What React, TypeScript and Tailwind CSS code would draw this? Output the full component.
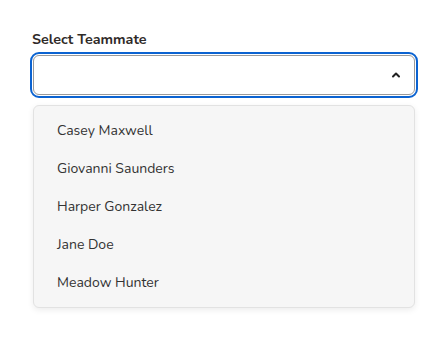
import { useState } from 'react'

const teammates = ['Casey Maxwell', 'Giovanni Saunders', 'Harper Gonzalez', 'Jane Doe', 'Meadow Hunter']

export default function App() {
  const [open] = useState(true)

  return (
    <div className="min-h-screen bg-white px-[33px] pt-[30px] font-['Nunito','Lato','Open_Sans',sans-serif]">
      <label className="-ml-px block text-[14.3px] leading-5 font-bold text-[#2f2a28]">Select Teammate</label>
      <div className="relative mt-[5px]">
        <button className="flex h-10 w-full items-center justify-end rounded-[6px] border border-[#9a9a9a] bg-white pr-[13px] outline-2 outline-offset-1 outline-[#0b63d1]">
          <svg width="10" height="10" viewBox="0 0 10 10" fill="none">
            <path d="M2 6.5 5 3.5 8 6.5" stroke="#222" strokeWidth="2" strokeLinecap="round" strokeLinejoin="round" />
          </svg>
        </button>

        {open && (
          <ul className="absolute top-[50px] right-0 left-0 rounded-[6px] border border-[#e2e2e2] bg-[#f6f6f6] pt-[5px] pb-[6px] shadow-[0_2px_6px_rgba(0,0,0,0.08)]">
            {teammates.map((name) => (
              <li key={name} className="flex h-[38px] items-center pl-[23px] text-[14px] text-[#333]">
                {name}
              </li>
            ))}
          </ul>
        )}
      </div>
    </div>
  )
}
